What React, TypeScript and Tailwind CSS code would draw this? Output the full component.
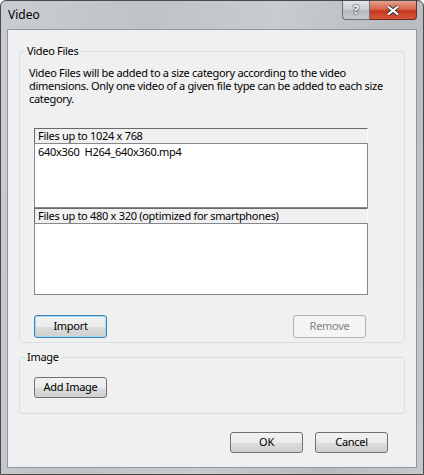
import React from "react";

const font = { fontFamily: '"Noto Sans", "Open Sans", Arial, sans-serif' };

function WinButton({
  label,
  focused,
  disabled,
  className,
}: {
  label: string;
  focused?: boolean;
  disabled?: boolean;
  className?: string;
}) {
  const border = focused
    ? "border-[#3c7fb1] shadow-[inset_0_0_0_1px_#9fdcf5]"
    : disabled
      ? "border-[#adb2b5]"
      : "border-[#707070]";
  const bg = disabled
    ? "bg-[#f4f4f4]"
    : "bg-[linear-gradient(#f2f2f2_0%,#ebebeb_50%,#dddddd_51%,#cfcfcf_100%)]";
  return (
    <button
      className={`w-[73px] flex items-center justify-center rounded-[3px] border text-[11px] tracking-[-0.3px] ${border} ${bg} ${
        disabled ? "text-[#838383]" : "text-black"
      } ${className ?? "h-[23px]"}`}
    >
      {label}
    </button>
  );
}

function GroupBox({
  title,
  className,
  children,
}: {
  title: string;
  className?: string;
  children: React.ReactNode;
}) {
  return (
    <div className={`relative rounded-[3px] border border-[#d5dfe5] ${className ?? ""}`}>
      <span className="absolute left-[5px] top-[-8px] bg-[#f0f0f0] px-[2px] text-[11px] tracking-[-0.3px] leading-[14px]">
        {title}
      </span>
      {children}
    </div>
  );
}

function ListSection({ title, height, children }: { title: string; height: string; children?: React.ReactNode }) {
  return (
    <div className="flex flex-col">
      <div className="h-[15px] border-l border-t border-[#696969] border-r-white border-r bg-[#f0f0f0] pl-[3px] text-[11px] tracking-[-0.3px] leading-[14px]">
        {title}
      </div>
      <div className={`border border-[#828790] bg-white pl-[3px] pt-[1px] text-[11px] tracking-[-0.3px] leading-[14px] ${height}`}>
        {children}
      </div>
    </div>
  );
}

export default function App() {
  return (
    <div className="w-[424px] h-[475px] bg-white" style={font}>
      <div className="w-[424px] h-[475px] flex flex-col rounded-t-[6px] border border-[#4a4a4a] bg-[linear-gradient(100deg,#c9cdd1_0%,#bfc3c7_30%,#c9ccce_55%,#b8bcc0_80%,#c5c9cc_100%)] px-[6px] pb-[6px]">
        {/* Title bar */}
        <div className="h-[28px] flex items-start justify-between shrink-0">
          <span className="pl-[1px] pt-[6px] text-[12px] leading-[15px] text-black">Video</span>
          <div className="flex">
            <div className="w-[28px] h-[19px] flex items-center justify-center rounded-bl-[4px] border border-t-0 border-[#6b6f73] bg-[linear-gradient(#e4e7ea_0%,#c8ccd0_50%,#b3b8bd_51%,#c6cbcf_100%)] text-[13px] font-bold text-white [text-shadow:0_0_1px_#222,0_0_2px_#222]">
              ?
            </div>
            <div className="w-[47px] h-[19px] flex items-center justify-center rounded-br-[4px] border border-l-0 border-t-0 border-[#6b2a22] bg-[linear-gradient(#e6a08e_0%,#d7664c_45%,#c4391d_55%,#d8553a_100%)]">
              <svg width="14" height="11" viewBox="0 0 14 11">
                <path d="M2 1.5 L12 9.5 M12 1.5 L2 9.5" stroke="#3a3a3a" strokeWidth="4" />
                <path d="M2 1.5 L12 9.5 M12 1.5 L2 9.5" stroke="#ffffff" strokeWidth="2.2" />
              </svg>
            </div>
          </div>
        </div>

        {/* Client area */}
        <div className="flex-1 flex flex-col border border-[#8e959c] bg-[#f0f0f0] px-[11px] pt-[21px] text-black">
          <GroupBox title="Video Files" className="h-[292px] pl-[9px] pt-[14px] pr-[12px]">
            <div className="flex flex-col text-[11px] tracking-[-0.3px] leading-[13px] whitespace-nowrap">
              <span className="h-[13px]">Video Files will be added to a size category according to the video</span>
              <span className="h-[13px]">dimensions. Only one video of a given file type can be added to each size</span>
              <span className="h-[13px]">category.</span>
            </div>
            <div className="mt-[23px] ml-[5px] w-[334px] flex flex-col">
              <ListSection title="Files up to 1024 x 768" height="h-[65px]">
                640x360&nbsp;&nbsp;H264_640x360.mp4
              </ListSection>
              <ListSection title="Files up to 480 x 320 (optimized for smartphones)" height="h-[72px]" />
            </div>
            <div className="mt-[20px] ml-[5px] w-[332px] flex justify-between">
              <WinButton label="Import" focused />
              <WinButton label="Remove" disabled />
            </div>
          </GroupBox>

          <GroupBox title="Image" className="mt-[14px] h-[57px] pl-[14px] pt-[19px]">
            <WinButton label="Add Image" className="h-[21px]" />
          </GroupBox>

          <div className="mt-[18px] flex justify-end gap-[12px] pr-[17px]">
            <WinButton label="OK" className="h-[21px]" />
            <WinButton label="Cancel" className="h-[21px]" />
          </div>
        </div>
      </div>
    </div>
  );
}
